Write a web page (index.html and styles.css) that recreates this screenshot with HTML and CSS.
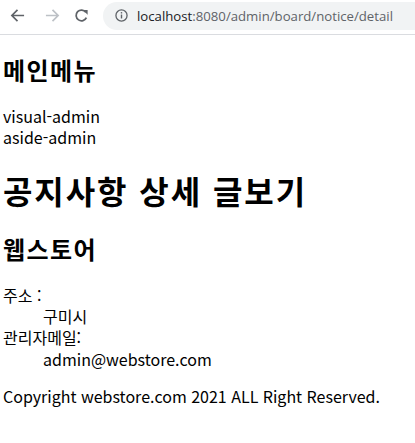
FILE: index.html
```html
<!DOCTYPE html>
<html lang="ko">
<head>
    <meta charset="UTF-8">
    <meta name="viewport" content="width=device-width, initial-scale=1.0">
    <title>공지사항 상세 글보기</title>
    <link rel="stylesheet" href="styles.css">
</head>
<body>
    <div class="toolbar">
        <div class="nav">
            <svg class="back" width="15" height="15" viewBox="0 0 16 16"><path d="M15 8H2.5M8 2L2 8l6 6" fill="none" stroke="#5f6368" stroke-width="1.8"/></svg>
            <svg class="forward" width="15" height="15" viewBox="0 0 16 16"><path d="M1 8h12.5M8 2l6 6-6 6" fill="none" stroke="#bdc1c6" stroke-width="1.8"/></svg>
            <svg class="reload" width="15" height="15" viewBox="0 0 16 16"><path d="M13.2 10.2A5.7 5.7 0 1 1 12.6 4.6" fill="none" stroke="#5f6368" stroke-width="1.9"/><path d="M9.5 2.2h5v5z" fill="#5f6368"/></svg>
        </div>
        <div class="omnibox">
            <svg width="13" height="13" viewBox="0 0 14 14"><circle cx="7" cy="7" r="6" fill="none" stroke="#5f6368" stroke-width="1.4"/><path d="M7 6v4.2" stroke="#5f6368" stroke-width="1.5"/><circle cx="7" cy="4" r="0.9" fill="#5f6368"/></svg>
            <span class="host">localhost</span><span class="path">:8080/admin/board/notice/detail</span>
        </div>
    </div>

    <div class="page">
        <h2>메인메뉴</h2>
        <div>visual-admin</div>
        <div>aside-admin</div>

        <h1>공지사항 상세 글보기</h1>

        <footer>
            <h2>웹스토어</h2>
            <dl>
                <dt>주소 :</dt>
                <dd>구미시</dd>
                <dt>관리자메일:</dt>
                <dd>admin@webstore.com</dd>
            </dl>
            <p>Copyright webstore.com 2021 ALL Right Reserved.</p>
        </footer>
    </div>
</body>
</html>
```

FILE: styles.css
```css
body {
    margin: 0;
    font-family: 'Noto Sans CJK KR', sans-serif;
    color: #000;
    background: #fff;
}

.toolbar {
    display: flex;
    align-items: center;
    height: 34px;
    border-bottom: 1px solid #dadce0;
    overflow: hidden;
}

.nav {
    display: flex;
    align-items: center;
    padding-left: 10px;
    margin-top: -3px;
}

.forward {
    margin-left: 20px;
}

.reload {
    margin-left: 14px;
}

.omnibox {
    display: flex;
    align-items: center;
    flex: none;
    width: 340px;
    height: 28px;
    margin-left: 14px;
    margin-top: -3px;
    padding-left: 12px;
    border-radius: 14px;
    background: #f1f3f4;
    font-family: 'Open Sans', sans-serif;
    font-size: 13.2px;
    white-space: nowrap;
}

.omnibox svg {
    margin-right: 9px;
}

.host {
    color: #202124;
}

.path {
    color: #5f6368;
}

.page {
    padding: 0 3px;
    line-height: 1.33;
    overflow: hidden;
}

h1, h2 {
    letter-spacing: 0.06em;
}

h1 {
    font-size: 32px;
    margin: 21px 0;
}

h2 {
    font-size: 24px;
    margin: 19px 0 20px;
}

dl {
    margin: 16px 0;
}

dd {
    margin-left: 40px;
}

p {
    margin: 16px 0;
}
```
